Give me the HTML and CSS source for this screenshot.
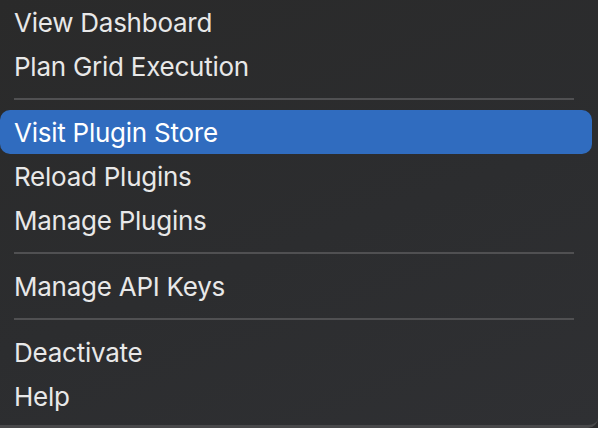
FILE: index.html
```html
<!DOCTYPE html>
<html>
<head>
<meta charset="utf-8">
<link rel="stylesheet" href="styles.css">
</head>
<body>
<div class="menu">
  <div class="item">View Dashboard</div>
  <div class="item">Plan Grid Execution</div>
  <div class="sep"></div>
  <div class="item active">Visit Plugin Store</div>
  <div class="item">Reload Plugins</div>
  <div class="item">Manage Plugins</div>
  <div class="sep"></div>
  <div class="item">Manage API Keys</div>
  <div class="sep"></div>
  <div class="item">Deactivate</div>
  <div class="item">Help</div>
</div>
</body>
</html>
```
FILE: styles.css
```css
html, body {
  margin: 0;
  padding: 0;
  width: 598px;
  height: 428px;
  overflow: hidden;
  background: #2b2b2d;
}
.menu {
  width: 598px;
  height: 428px;
  box-sizing: border-box;
  display: flex;
  flex-direction: column;
  padding: 0 6px 0 0;
  background: linear-gradient(160deg, #2a2a2a 0%, #2c2d2f 55%, #2f3033 100%);
  border-bottom: 3px solid #48484a;
  border-bottom-right-radius: 10px;
  font-family: Inter, "Noto Sans", "Liberation Sans", sans-serif;
}
.item {
  height: 44px;
  line-height: 46px;
  padding-left: 14px;
  font-size: 26px;
  letter-spacing: -0.25px;
  color: #e8e8e8;
  border-radius: 10px;
  flex: none;
  white-space: nowrap;
  box-sizing: border-box;
}
.item.active {
  background: #306cbf;
  color: #ffffff;
}
.sep {
  flex: none;
  height: 2px;
  margin: 10px 18px 10px 14px;
  background: #505052;
}
```
